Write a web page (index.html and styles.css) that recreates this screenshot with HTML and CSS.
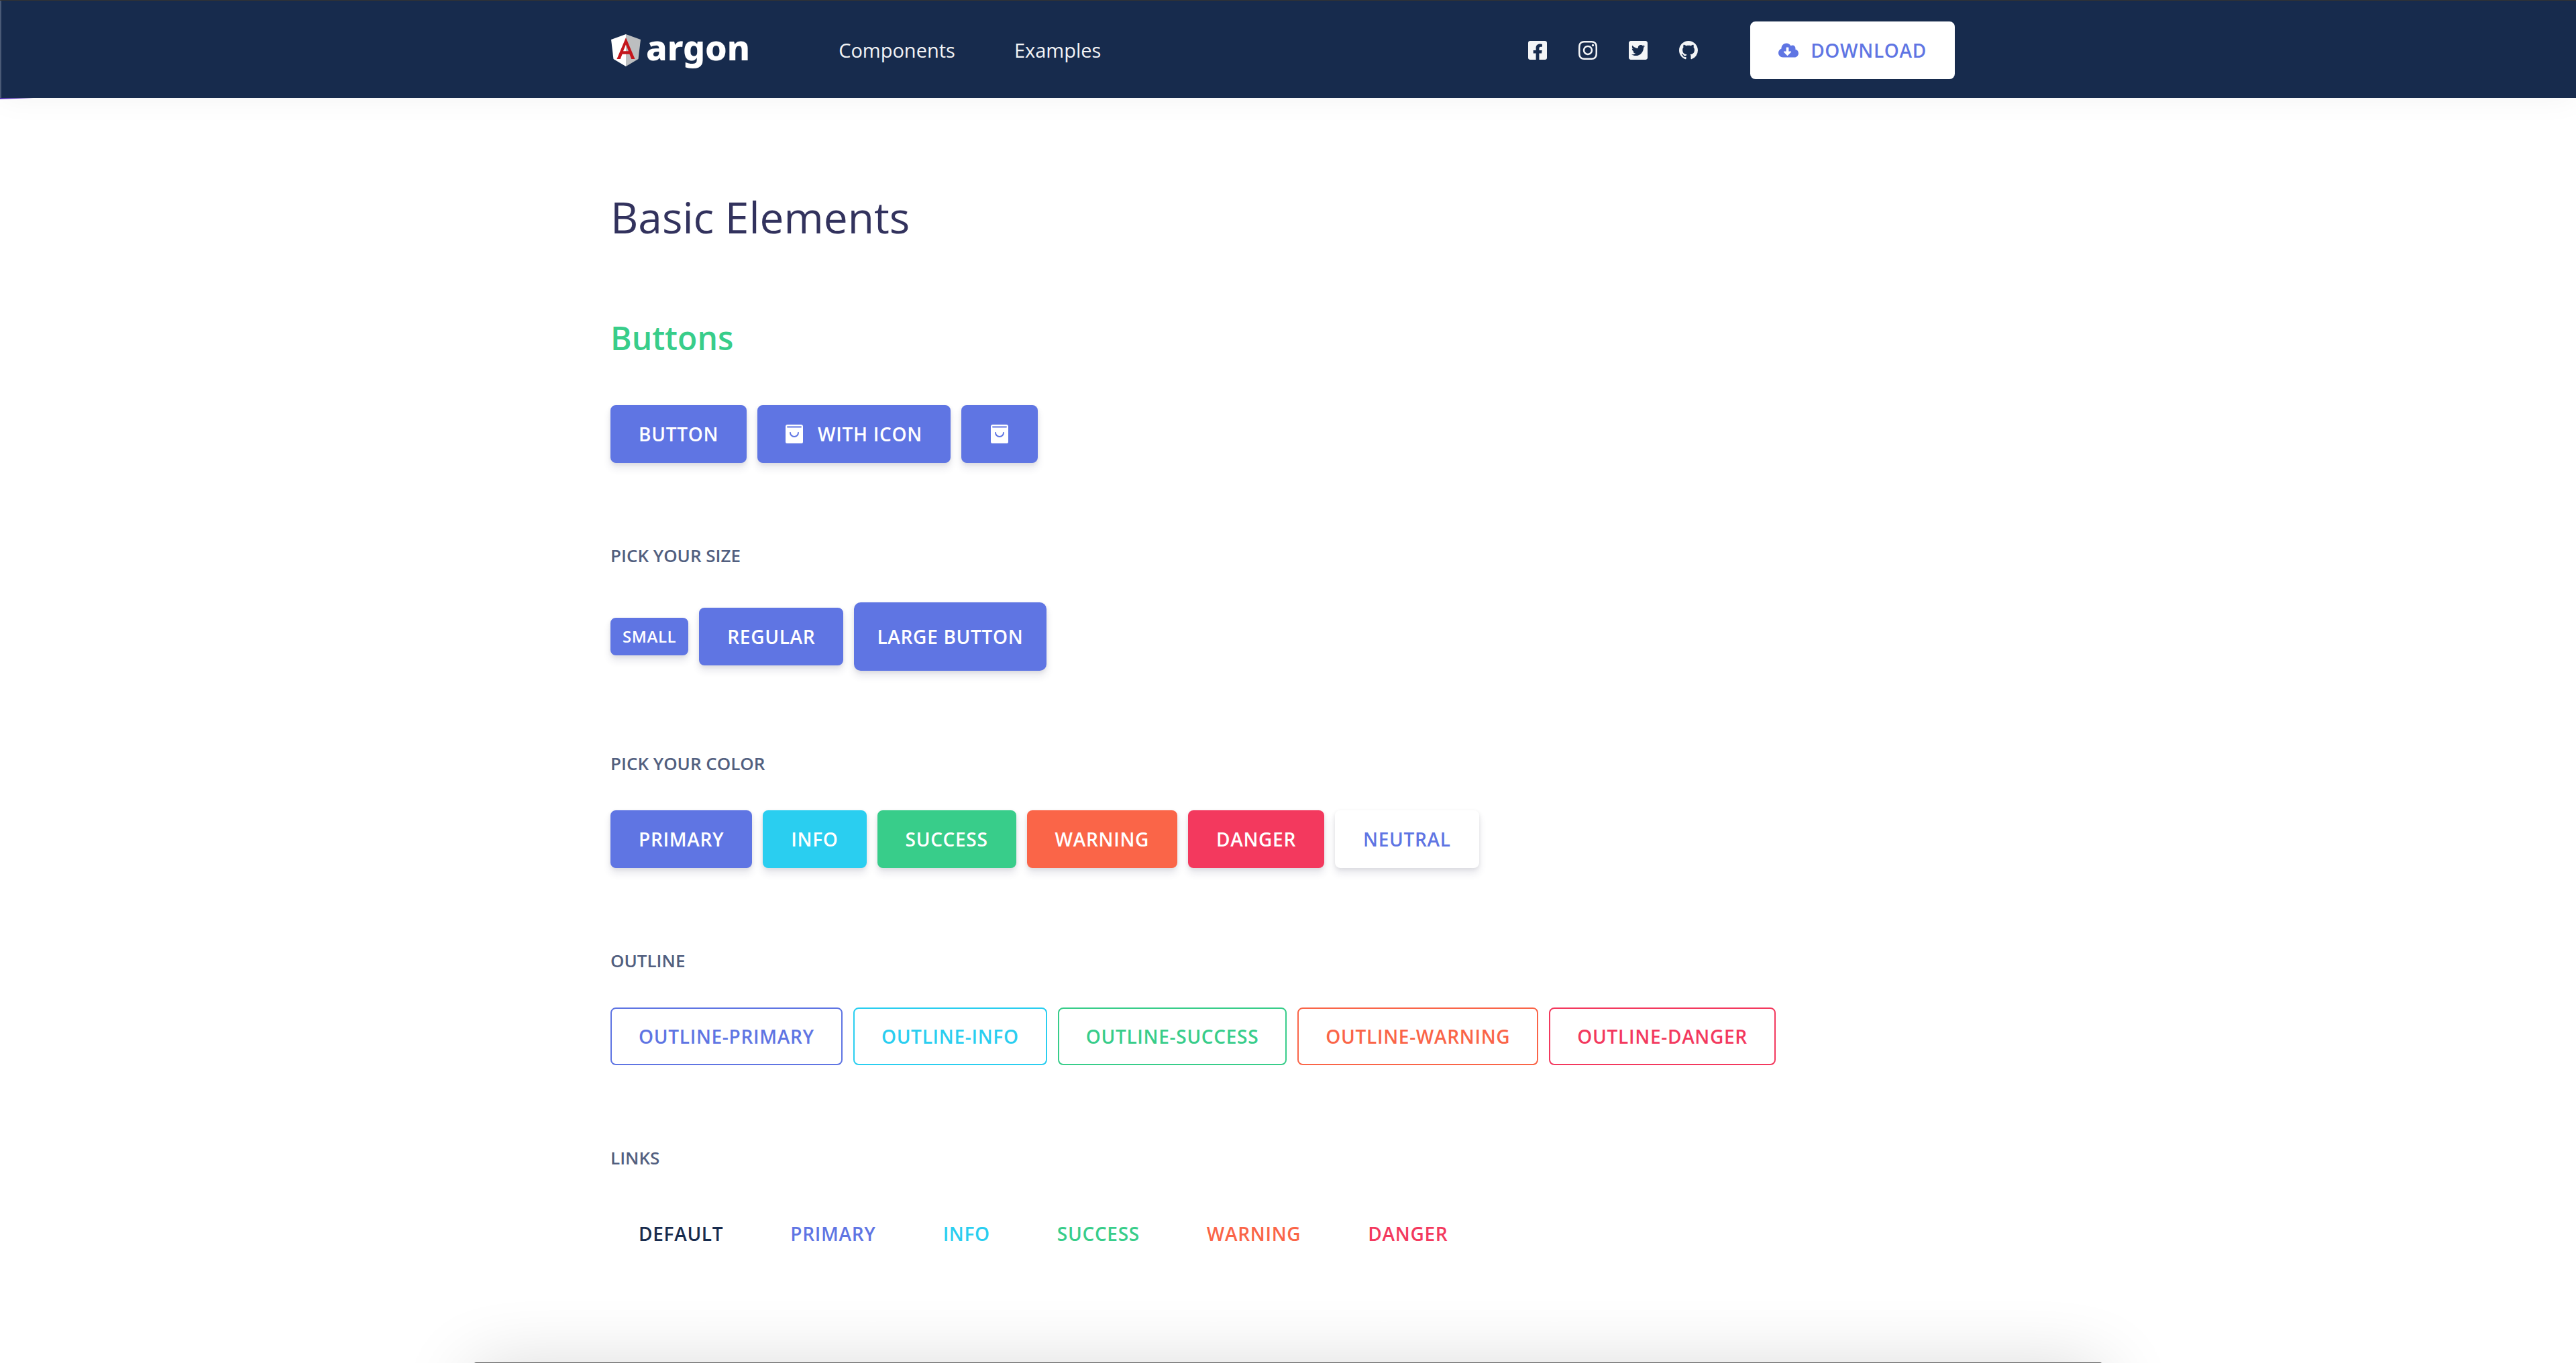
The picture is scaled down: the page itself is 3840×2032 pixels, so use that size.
FILE: index.html
```html
<!DOCTYPE html>
<html lang="en">
<head>
<meta charset="utf-8">
<title>Argon - Basic Elements</title>
<link rel="stylesheet" href="styles.css">
</head>
<body>
<header class="navbar">
  <div class="container navbar-inner">
    <a class="brand" href="#" aria-label="argon">
      <svg class="brand-shield" viewBox="0 0 44 48" aria-hidden="true">
        <path fill="#fff" d="M22 0 0 8l3.500 29L22 48z"/>
        <path fill="#bcbec0" d="M22 0l22 8-3.500 29L22 48z"/>
        <path fill="#c4161c" fill-rule="evenodd" d="M22 5 8.500 37h5.300l2.800-7.200h10.800L30.200 37h5.300zM22 15.500l4 9.800h-8z"/>
      </svg>
      <span class="brand-name">argon</span>
    </a>
    <nav class="menu">
      <a href="#">Components</a>
      <a href="#">Examples</a>
    </nav>
    <div class="social">
      <a href="#" aria-label="Facebook"><svg viewBox="0 32 448 448"><path d="M400 32H48A48 48 0 0 0 0 80v352a48 48 0 0 0 48 48h137.250V327.690h-63V256h63v-54.640c0-62.150 37-96.480 93.670-96.480 27.140 0 55.520 4.840 55.520 4.840v61h-31.270c-30.810 0-40.420 19.120-40.420 38.730V256h68.780l-11 71.690h-57.780V480H400a48 48 0 0 0 48-48V80a48 48 0 0 0-48-48z"/></svg></a>
      <a href="#" aria-label="Instagram"><svg viewBox="0 32 448 448"><path d="M224.100 141c-63.600 0-114.900 51.300-114.900 114.900s51.300 114.900 114.900 114.900S339 319.500 339 255.900 287.700 141 224.100 141zm0 189.600c-41.100 0-74.700-33.500-74.700-74.700s33.500-74.700 74.700-74.700 74.700 33.500 74.700 74.700-33.600 74.700-74.700 74.700zm146.400-194.300c0 14.900-12 26.800-26.800 26.800-14.900 0-26.800-12-26.800-26.800s12-26.800 26.800-26.800 26.800 12 26.800 26.800zm76.100 27.200c-1.700-35.900-9.900-67.700-36.200-93.900-26.200-26.200-58-34.400-93.900-36.200-37-2.100-147.900-2.100-184.900 0-35.800 1.700-67.600 9.900-93.900 36.100s-34.400 58-36.200 93.900c-2.100 37-2.100 147.900 0 184.900 1.700 35.900 9.900 67.700 36.200 93.900s58 34.400 93.900 36.200c37 2.100 147.900 2.100 184.900 0 35.900-1.700 67.700-9.900 93.900-36.200 26.200-26.200 34.400-58 36.200-93.900 2.100-37 2.100-147.800 0-184.800zM398.800 388c-7.800 19.600-22.900 34.700-42.600 42.600-29.500 11.700-99.500 9-132.100 9s-102.700 2.600-132.100-9c-19.600-7.800-34.700-22.900-42.600-42.600-11.700-29.500-9-99.500-9-132.100s-2.600-102.700 9-132.100c7.800-19.600 22.900-34.700 42.600-42.600 29.500-11.700 99.500-9 132.100-9s102.700-2.600 132.100 9c19.600 7.800 34.700 22.900 42.600 42.600 11.700 29.500 9 99.500 9 132.100s2.700 102.700-9 132.100z"/></svg></a>
      <a href="#" aria-label="Twitter"><svg viewBox="0 32 448 448"><path d="M400 32H48C21.500 32 0 53.500 0 80v352c0 26.500 21.500 48 48 48h352c26.500 0 48-21.500 48-48V80c0-26.500-21.500-48-48-48zm-48.900 158.800c.2 2.800.2 5.700.2 8.500 0 86.700-66 186.600-186.600 186.600-37.200 0-71.700-10.800-100.700-29.400 5.300.6 10.400.8 15.800.8 30.700 0 58.900-10.400 81.400-28-28.800-.6-53-19.500-61.300-45.500 10.100 1.500 19.200 1.500 29.600-1.200-30-6.100-52.500-32.500-52.500-64.400v-.8c8.700 4.900 18.900 7.900 29.600 8.300a65.447 65.447 0 0 1-29.200-54.600c0-12.200 3.200-23.400 8.900-33.100 32.300 39.800 80.800 65.800 135.200 68.600-9.300-44.500 24-80.600 64-80.600 18.900 0 35.900 7.900 47.900 20.700 14.800-2.800 29-8.300 41.600-15.800-4.900 15.200-15.200 28-28.800 36.100 13.200-1.400 26-5.100 37.800-10.200-8.900 13.100-20.100 24.700-32.900 34z"/></svg></a>
      <a href="#" aria-label="GitHub"><svg viewBox="0 0 16 16"><path d="M8 0C3.580 0 0 3.580 0 8c0 3.540 2.290 6.530 5.470 7.590.4.070.55-.17.55-.38 0-.19-.01-.82-.01-1.490-2.010.37-2.530-.49-2.690-.94-.09-.23-.48-.94-.82-1.130-.28-.15-.68-.52-.01-.53.63-.01 1.080.58 1.230.82.72 1.210 1.870.87 2.330.66.07-.52.28-.87.51-1.070-1.780-.2-3.640-.89-3.640-3.950 0-.87.31-1.590.82-2.150-.08-.2-.36-1.020.08-2.120 0 0 .67-.21 2.200.82.64-.18 1.320-.27 2-.27s1.360.09 2 .27c1.530-1.040 2.200-.82 2.200-.82.44 1.100.16 1.920.08 2.120.51.56.82 1.270.82 2.150 0 3.070-1.870 3.750-3.650 3.950.29.25.54.73.54 1.480 0 1.070-.01 1.930-.01 2.200 0 .21.15.46.55.38A8.010 8.010 0 0 0 16 8c0-4.420-3.580-8-8-8z"/></svg></a>
    </div>
    <a class="btn btn-white download" href="#">
      <svg class="cloud" viewBox="0 32 640 448" aria-hidden="true"><path d="M537.600 226.600c4.100-10.700 6.400-22.400 6.400-34.600 0-53-43-96-96-96-19.700 0-38.100 6-53.300 16.200C367 64.200 315.300 32 256 32c-88.400 0-160 71.600-160 160 0 2.700.1 5.400.2 8.100C40.200 219.800 0 273.200 0 336c0 79.500 64.500 144 144 144h368c70.700 0 128-57.300 128-128 0-61.900-44-113.600-102.400-125.400zm-132.900 88.700L299.300 420.700c-6.200 6.200-16.400 6.200-22.600 0L171.300 315.300c-10.100-10.100-2.900-27.300 11.300-27.300H248V176c0-8.800 7.200-16 16-16h48c8.800 0 16 7.200 16 16v112h65.400c14.200 0 21.400 17.200 11.300 27.300z"/></svg>
      <span>Download</span>
    </a>
  </div>
</header>
<main class="container content">
  <h1 class="page-title">Basic Elements</h1>
  <h2 class="section-title">Buttons</h2>
  <div class="row">
    <button class="btn btn-primary" type="button">Button</button>
    <button class="btn btn-primary btn-with-icon" type="button">
      <svg class="bag" viewBox="0 0 26 28" aria-hidden="true"><use href="#bag"/></svg>
      <span>With icon</span>
    </button>
    <button class="btn btn-primary btn-icon-only" type="button" aria-label="Bag">
      <svg class="bag" viewBox="0 0 26 28" aria-hidden="true"><g id="bag"><path fill="#fff" d="M3 0h20a3 3 0 0 1 3 3v23a2 2 0 0 1-2 2H2a2 2 0 0 1-2-2V3a3 3 0 0 1 3-3z"/><path fill="none" stroke="#5f75e3" stroke-width="2" stroke-linecap="round" d="M3 3.500h20M7 12a6 6 0 0 0 12 0"/></g></svg>
    </button>
  </div>
  <h3 class="label">Pick your size</h3>
  <div class="row">
    <button class="btn btn-primary btn-sm" type="button">Small</button>
    <button class="btn btn-primary" type="button">Regular</button>
    <button class="btn btn-primary btn-lg" type="button">Large Button</button>
  </div>
  <h3 class="label">Pick your color</h3>
  <div class="row">
    <button class="btn btn-primary" type="button">Primary</button>
    <button class="btn btn-info" type="button">Info</button>
    <button class="btn btn-success" type="button">Success</button>
    <button class="btn btn-warning" type="button">Warning</button>
    <button class="btn btn-danger" type="button">Danger</button>
    <button class="btn btn-white" type="button">Neutral</button>
  </div>
  <h3 class="label">Outline</h3>
  <div class="row">
    <button class="btn btn-outline primary" type="button">Outline-primary</button>
    <button class="btn btn-outline info" type="button">Outline-info</button>
    <button class="btn btn-outline success" type="button">Outline-success</button>
    <button class="btn btn-outline warning" type="button">Outline-warning</button>
    <button class="btn btn-outline danger" type="button">Outline-danger</button>
  </div>
  <h3 class="label">Links</h3>
  <div class="row">
    <a class="btn btn-link default" href="#">Default</a>
    <a class="btn btn-link primary" href="#">Primary</a>
    <a class="btn btn-link info" href="#">Info</a>
    <a class="btn btn-link success" href="#">Success</a>
    <a class="btn btn-link warning" href="#">Warning</a>
    <a class="btn btn-link danger" href="#">Danger</a>
  </div>
</main>
<div class="sheet"></div>
</body>
</html>
```
FILE: styles.css
```css
* {
  box-sizing: border-box;
}

html {
  height: 100%;
  overflow: hidden;
}

body {
  position: relative;
  min-height: 100%;
  overflow: hidden;
  margin: 0;
  background: #fff;
  color: #525f7f;
  font-family: "Open Sans", "Noto Sans", sans-serif;
  font-size: 28px;
  line-height: 42px;
}

a {
  color: inherit;
  text-decoration: none;
}

svg {
  display: block;
  fill: currentColor;
}

.container {
  width: 100%;
  max-width: 2020px;
  margin: 0 auto;
}

/* Navigation */
.navbar {
  position: relative;
  padding: 31px 0 28px;
  border-top: 1px solid #333;
  background: #172b4d;
  box-shadow: 0 0 48px rgba(0, 0, 0, 0.05);
}

.navbar::before {
  content: "";
  position: absolute;
  inset: 0 auto 0 0;
  width: 2px;
  background: #4a5a76;
}

.navbar::after {
  content: "";
  position: absolute;
  left: 0;
  top: 100%;
  width: 50px;
  height: 2px;
  background: #5533b0;
  clip-path: polygon(0 0, 100% 0, 0 100%);
}

.navbar-inner {
  display: flex;
  align-items: center;
  padding-right: 16px;
}

.brand {
  display: flex;
  align-items: center;
  gap: 8px;
  padding-left: 1px;
  color: #fff;
}

.brand-shield {
  width: 44px;
  height: 48px;
}

.brand-name {
  padding-bottom: 10px;
  font-family: "Noto Sans", sans-serif;
  font-size: 52px;
  font-weight: 800;
  line-height: 56px;
}

.menu {
  display: flex;
  gap: 88px;
  margin-left: 132px;
  color: #f3f4f6;
  font-size: 29px;
}

.social {
  display: flex;
  gap: 47px;
  margin-left: auto;
  margin-right: 78px;
  color: #f3f4f6;
}

.social svg {
  width: 28px;
  height: 28px;
}

.cloud {
  width: 30px;
  height: 22px;
}

/* Page content */
.page-title {
  margin: 134px 0 0;
  color: #32325d;
  font-size: 64px;
  font-weight: 400;
  line-height: 88px;
}

.section-title {
  margin: 100px 0 64px;
  color: #38cd8a;
  font-size: 48px;
  font-weight: 600;
  line-height: 72px;
}

.label {
  margin: 119px 0 50px;
  font-size: 26px;
  font-weight: 600;
  line-height: 39px;
  text-transform: uppercase;
}

.row {
  display: flex;
  flex-wrap: wrap;
  align-items: center;
  gap: 16px;
}

/* Buttons */
.btn {
  display: inline-flex;
  align-items: center;
  gap: 18px;
  min-height: 86px;
  padding: 20px 40px;
  border: 2px solid transparent;
  border-radius: 8px;
  background: transparent;
  color: #fff;
  font-family: inherit;
  font-size: 28px;
  font-weight: 600;
  line-height: 42px;
  letter-spacing: 0.025em;
  text-transform: uppercase;
  box-shadow: 0 8px 12px rgba(50, 50, 93, 0.11), 0 2px 6px rgba(0, 0, 0, 0.08);
}

.btn-sm {
  min-height: 56px;
  padding: 8px 16px;
  font-size: 24px;
  line-height: 36px;
}

.btn-lg {
  padding: 28px 32px;
  border-radius: 10px;
}

.btn-with-icon {
  gap: 22px;
}

.btn-icon-only {
  padding: 20px 42px;
}

.bag {
  width: 26px;
  height: 28px;
}

.btn-primary {
  border-color: #5f75e3;
  background: #5f75e3;
}

.btn-info {
  border-color: #2acef0;
  background: #2acef0;
}

.btn-success {
  border-color: #38cd8a;
  background: #38cd8a;
}

.btn-warning {
  border-color: #fa6548;
  background: #fa6548;
}

.btn-danger {
  border-color: #f3395e;
  background: #f3395e;
}

.btn-white {
  border-color: #fff;
  background: #fff;
  color: #5f75e3;
}

.btn-outline {
  border-color: currentColor;
  box-shadow: none;
}

.btn-link {
  box-shadow: none;
}

.default { color: #172b4d; }
.primary { color: #5f75e3; }
.info { color: #2acef0; }
.success { color: #38cd8a; }
.warning { color: #fa6548; }
.danger { color: #f3395e; }

.download {
  box-shadow: none;
}

/* Panel peeking in from below the window */
.sheet {
  position: fixed;
  left: 706px;
  right: 706px;
  bottom: -79px;
  height: 80px;
  border-radius: 4px 4px 0 0;
  background: #666;
  box-shadow: 0 16px 112px rgba(0, 0, 0, 0.2);
}
```
